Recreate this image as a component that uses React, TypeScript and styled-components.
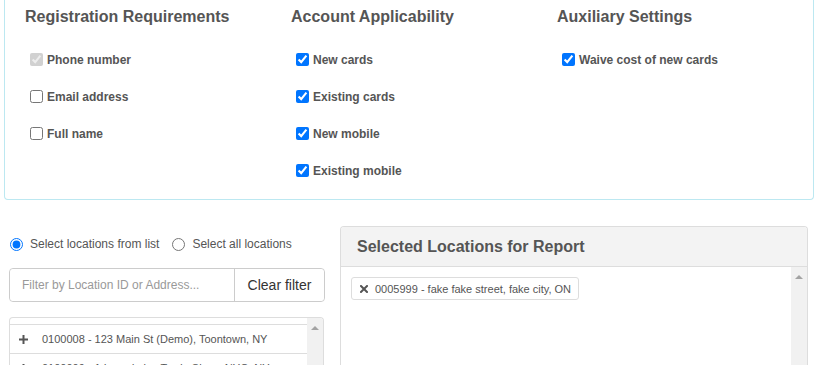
import styled, { createGlobalStyle } from "styled-components";

const GlobalStyle = createGlobalStyle`
    html, body {
        margin: 0;
        padding: 0;
        background: #ffffff;
        overflow: hidden;
    }
    body {
        font-family: "Liberation Sans", Arial, sans-serif;
        color: #555555;
    }
`

const Page = styled.div`
    width: 818px;
    height: 365px;
    overflow: hidden;
`

const SettingsPanel = styled.div`
    margin: 0 4px;
    height: 200px;
    box-sizing: border-box;
    border: 1px solid #bce8f1;
    border-top: none;
    border-radius: 0 0 4px 4px;
    padding: 7px 0 0 20px;
    display: grid;
    grid-template-columns: 266px 266px 266px;
`

const Column = styled.div`
    display: flex;
    flex-direction: column;
`

const ColumnTitle = styled.h3`
    margin: 0 0 14px 0;
    font-size: 16px;
    line-height: 20px;
    font-weight: 700;
    color: #555555;
`

const CheckRow = styled.label`
    display: flex;
    align-items: center;
    height: 37px;
    font-size: 12px;
    font-weight: 700;
    color: #555555;
`

const CheckBox = styled.input`
    width: 13px;
    height: 13px;
    margin: 0 4px 0 5px;
`

const BottomRow = styled.div`
    display: flex;
    align-items: flex-start;
    gap: 15px;
    margin-top: 26px;
    padding: 0 10px 0 9px;
`

const LeftColumn = styled.div`
    width: 316px;
    padding-top: 8px;
    display: flex;
    flex-direction: column;
`

const RadioRow = styled.div`
    display: flex;
    align-items: center;
    height: 20px;
    font-size: 12px;
    color: #555555;
`

const RadioLabel = styled.label`
    display: flex;
    align-items: center;
    margin-right: 12px;
`

const Radio = styled.input`
    width: 13px;
    height: 13px;
    margin: 0 7px 0 1px;
`

const InputGroup = styled.div`
    display: flex;
    height: 34px;
    margin-top: 14px;
    border: 1px solid #cccccc;
    border-radius: 4px;
    box-sizing: border-box;
`

const FilterInput = styled.input`
    flex: 1;
    min-width: 0;
    border: none;
    border-radius: 4px 0 0 4px;
    padding: 0 12px;
    font-family: "Liberation Sans", Arial, sans-serif;
    font-size: 12px;
    color: #555555;
    outline: none;
    &::placeholder {
        color: #999999;
    }
`

const ClearButton = styled.button`
    width: 90px;
    border: none;
    border-left: 1px solid #cccccc;
    border-radius: 0 4px 4px 0;
    background: #ffffff;
    font-family: "Liberation Sans", Arial, sans-serif;
    font-size: 14px;
    color: #333333;
    padding: 0;
`

const LocationList = styled.div`
    display: flex;
    margin-top: 15px;
    width: 315px;
    height: 60px;
    border: 1px solid #dddddd;
    border-bottom: none;
    border-radius: 4px 4px 0 0;
    box-sizing: border-box;
    overflow: hidden;
`

const ListItems = styled.div`
    flex: 1;
    padding-top: 6px;
`

const ListItem = styled.div`
    display: flex;
    align-items: center;
    height: 28px;
    border-top: 1px solid #dddddd;
    padding-left: 9px;
    font-size: 11px;
    color: #555555;
`

const PlusIcon = styled.span`
    width: 9px;
    margin-right: 14px;
    display: flex;
`

const Scrollbar = styled.div<{ $top: number }>`
    width: 16px;
    background: #f1f1f1;
    display: flex;
    justify-content: center;
    padding-top: ${(p) => p.$top}px;
    box-sizing: border-box;
`

const UpArrow = styled.div`
    width: 0;
    height: 0;
    border-left: 4px solid transparent;
    border-right: 4px solid transparent;
    border-bottom: 4px solid #a3a3a3;
`

const ReportPanel = styled.div`
    width: 468px;
    height: 160px;
    border: 1px solid #dddddd;
    border-bottom: none;
    border-radius: 4px 4px 0 0;
    box-sizing: border-box;
    display: flex;
    flex-direction: column;
    overflow: hidden;
`

const ReportHeader = styled.div`
    height: 40px;
    flex-shrink: 0;
    box-sizing: border-box;
    background: #f3f3f3;
    border-bottom: 1px solid #dddddd;
    padding: 0 16px;
    display: flex;
    align-items: center;
    font-size: 16px;
    font-weight: 700;
    color: #555555;
`

const ReportBody = styled.div`
    flex: 1;
    display: flex;
`

const TagArea = styled.div`
    flex: 1;
    padding: 10px 10px;
`

const Tag = styled.div`
    display: inline-flex;
    align-items: center;
    height: 23px;
    box-sizing: border-box;
    border: 1px solid #dddddd;
    border-radius: 3px;
    padding: 0 7px 0 8px;
    font-size: 11px;
    color: #555555;
`

const RemoveIcon = styled.span`
    display: flex;
    margin-right: 7px;
`

function Plus() {
    return (
        <svg width="9" height="9" viewBox="0 0 9 9">
            <path d="M3.5 0h2v3.5H9v2H5.5V9h-2V5.5H0v-2h3.5z" fill="#555555" />
        </svg>
    )
}

function Cross() {
    return (
        <svg width="8" height="8" viewBox="0 0 8 8">
            <path d="M1 1L7 7M7 1L1 7" stroke="#555555" strokeWidth="2" strokeLinecap="square" />
        </svg>
    )
}

const columns = [
    {
        title: "Registration Requirements",
        items: [
            { label: "Phone number", checked: true, disabled: true },
            { label: "Email address", checked: false },
            { label: "Full name", checked: false },
        ],
    },
    {
        title: "Account Applicability",
        items: [
            { label: "New cards", checked: true },
            { label: "Existing cards", checked: true },
            { label: "New mobile", checked: true },
            { label: "Existing mobile", checked: true },
        ],
    },
    {
        title: "Auxiliary Settings",
        items: [{ label: "Waive cost of new cards", checked: true }],
    },
]

const locations = [
    "0100008 - 123 Main St (Demo), Toontown, NY",
    "0100009 - 1 Laundrylux Trade Show, NYC, NY",
]

export default function App() {
    return (
        <Page>
            <GlobalStyle />
            <SettingsPanel>
                {columns.map((col) => (
                    <Column key={col.title}>
                        <ColumnTitle>{col.title}</ColumnTitle>
                        {col.items.map((item) => (
                            <CheckRow key={item.label}>
                                <CheckBox
                                    type="checkbox"
                                    defaultChecked={item.checked}
                                    disabled={"disabled" in item ? item.disabled : false}
                                />
                                {item.label}
                            </CheckRow>
                        ))}
                    </Column>
                ))}
            </SettingsPanel>

            <BottomRow>
                <LeftColumn>
                    <RadioRow>
                        <RadioLabel>
                            <Radio type="radio" name="locmode" defaultChecked />
                            Select locations from list
                        </RadioLabel>
                        <RadioLabel>
                            <Radio type="radio" name="locmode" />
                            Select all locations
                        </RadioLabel>
                    </RadioRow>
                    <InputGroup>
                        <FilterInput placeholder="Filter by Location ID or Address..." />
                        <ClearButton>Clear filter</ClearButton>
                    </InputGroup>
                    <LocationList>
                        <ListItems>
                            {locations.map((loc) => (
                                <ListItem key={loc}>
                                    <PlusIcon><Plus /></PlusIcon>
                                    {loc}
                                </ListItem>
                            ))}
                        </ListItems>
                        <Scrollbar $top={8}><UpArrow /></Scrollbar>
                    </LocationList>
                </LeftColumn>

                <ReportPanel>
                    <ReportHeader>Selected Locations for Report</ReportHeader>
                    <ReportBody>
                        <TagArea>
                            <Tag>
                                <RemoveIcon><Cross /></RemoveIcon>
                                0005999 - fake fake street, fake city, ON
                            </Tag>
                        </TagArea>
                        <Scrollbar $top={8}><UpArrow /></Scrollbar>
                    </ReportBody>
                </ReportPanel>
            </BottomRow>
        </Page>
    )
}
